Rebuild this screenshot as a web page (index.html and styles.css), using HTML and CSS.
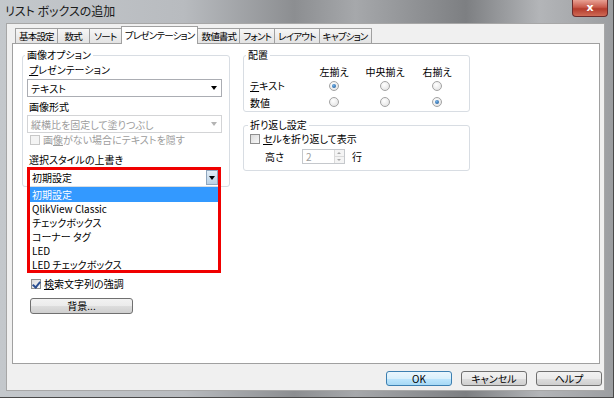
FILE: index.html
```html
<!DOCTYPE html>
<html lang="ja">
<head>
    <meta charset="UTF-8">
    <meta name="viewport" content="width=device-width, initial-scale=1.0">
    <title>リスト ボックスの追加</title>
    <link rel="stylesheet" href="styles.css">
</head>
<body>
    <div class="window">
        <div class="titlebar">
            <span class="title">リスト ボックスの追加</span>
            <span class="close">x</span>
        </div>
        <div class="client">
            <div class="tabs">
                <div class="tab">基本設定</div>
                <div class="tab">数式</div>
                <div class="tab">ソート</div>
                <div class="tab active">プレゼンテーション</div>
                <div class="tab">数値書式</div>
                <div class="tab">フォント</div>
                <div class="tab">レイアウト</div>
                <div class="tab">キャプション</div>
            </div>
            <div class="panel">
                <div class="col-left">
                    <fieldset class="group group-image">
                        <legend>画像オプション</legend>
                        <div class="label"><u>プ</u>レゼンテーション</div>
                        <div class="select"><span>テキスト</span><i class="arrow"></i></div>
                        <div class="label label-format">画像形式</div>
                        <div class="select disabled"><span>縦横比を固定して塗りつぶし</span><i class="arrow"></i></div>
                        <div class="check disabled"><span class="box"></span><span>画<u>像</u>がない場合にテキストを隠す</span></div>
                        <div class="label label-style">選択スタイルの上書き</div>
                        <div class="combo">
                            <div class="combo-field">
                                <span>初期設定</span>
                                <span class="combo-btn"><i class="arrow"></i></span>
                            </div>
                            <ul class="dropdown">
                                <li class="selected">初期設定</li>
                                <li>QlikView Classic</li>
                                <li>チェックボックス</li>
                                <li>コーナー タグ</li>
                                <li>LED</li>
                                <li>LED チェックボックス</li>
                            </ul>
                            <div class="mark"></div>
                        </div>
                    </fieldset>
                    <div class="check check-search"><span class="box checked"></span><span><u>検</u>索文字列の強調</span></div>
                    <div class="btn btn-bg">背景...</div>
                </div>
                <div class="col-right">
                    <fieldset class="group group-align">
                        <legend>配置</legend>
                        <div class="align-grid">
                            <span></span>
                            <span class="col-head">左揃え</span>
                            <span class="col-head">中央揃え</span>
                            <span class="col-head">右揃え</span>

                            <span class="row-label"><u>テ</u>キスト</span>
                            <span class="cell"><span class="radio on"></span></span>
                            <span class="cell"><span class="radio"></span></span>
                            <span class="cell"><span class="radio"></span></span>

                            <span class="row-label row-num">数値</span>
                            <span class="cell row-num"><span class="radio"></span></span>
                            <span class="cell row-num"><span class="radio"></span></span>
                            <span class="cell row-num"><span class="radio on"></span></span>
                        </div>
                    </fieldset>
                    <fieldset class="group group-wrap">
                        <legend>折り返し設定</legend>
                        <div class="check"><span class="box"></span><span><u>セ</u>ルを折り返して表示</span></div>
                        <div class="height-row">
                            <span class="height-label">高さ</span>
                            <span class="spin">
                                <span class="spin-value">2</span>
                                <span class="spin-btns">
                                    <span class="spin-up"></span>
                                    <span class="spin-down"></span>
                                </span>
                            </span>
                            <span class="unit">行</span>
                        </div>
                    </fieldset>
                </div>
            </div>
            <div class="buttons">
                <div class="btn btn-default">OK</div>
                <div class="btn">キャンセル</div>
                <div class="btn">ヘルプ</div>
            </div>
        </div>
    </div>
</body>
</html>
```

FILE: styles.css
```css
* {
    box-sizing: border-box;
}
body {
    margin: 0;
    font-family: "Noto Sans CJK JP", "Noto Sans", sans-serif;
    font-size: 10px;
    font-feature-settings: "palt";
    color: #000;
}
u {
    text-decoration-thickness: 1px;
    text-underline-offset: 1px;
}
.window {
    width: 614px;
    height: 398px;
    display: flex;
    flex-direction: column;
    background: linear-gradient(90deg, #c4c8cc 0%, #b8bbbf 30%, #8c8e91 48%, #a6a8ab 58%, #7d7f82 76%, #b3b5b8 88%, #9c9ea1 100%);
    border-right: 1px solid #4a4a4a;
    border-bottom: 1px solid #4a4a4a;
}
.titlebar {
    height: 23px;
    display: flex;
    align-items: flex-start;
    padding-left: 5px;
}
.title {
    font-size: 12px;
    line-height: 22px;
    color: #1a1a1a;
}
.close {
    margin-left: auto;
    margin-right: 5px;
    width: 36px;
    height: 17px;
    border: 1px solid #6b2b2b;
    border-top: none;
    border-radius: 0 0 4px 4px;
    background: linear-gradient(#e8a093, #c95b4c 45%, #b33b2c 55%, #cf6a55);
    color: #fff;
    font-family: "DejaVu Sans", sans-serif;
    font-weight: bold;
    font-size: 11px;
    line-height: 15px;
    text-align: center;
}
.client {
    flex: 1;
    margin: 0 8px 6px 6px;
    background: #f0f0f0;
    border: 1px solid #a7a7a7;
    display: flex;
    flex-direction: column;
    padding: 2px 2px 0 5px;
}

/* タブ */
.tabs {
    height: 17px;
    display: flex;
    align-items: flex-end;
    margin-left: 3px;
    position: relative;
    z-index: 1;
}
.tab {
    height: 15px;
    min-width: 33px;
    padding: 0 3px;
    border: 1px solid #a0a0a0;
    border-bottom: none;
    margin-right: -1px;
    background: linear-gradient(#f6f6f6, #e3e3e3);
    font-size: 9.5px;
    line-height: 14px;
    letter-spacing: -0.8px;
    text-align: center;
    white-space: nowrap;
}
.tab.active {
    height: 18px;
    margin-bottom: -1px;
    background: #fff;
    position: relative;
    z-index: 2;
    line-height: 16px;
}
.panel {
    height: 321px;
    margin-right: 2px;
    background: #fff;
    border: 1px solid #a0a0a0;
    display: flex;
    gap: 13px;
    padding: 5px 9px 0;
}

/* グループ */
.group {
    margin: 0;
    border: 1px solid #d8dde3;
    border-radius: 3px;
    padding: 2px 3px 1px 4px;
}
.group legend {
    padding: 0 2px;
    margin-left: -2px;
    line-height: 12px;
}
.col-left {
    width: 208px;
}
.col-right {
    width: 227px;
}
.label {
    line-height: 14px;
    margin-left: 2px;
}
.label-format {
    margin-top: 3px;
}
.label-style {
    margin-top: 6px;
}
.select {
    width: 195px;
    height: 18px;
    margin-top: 1px;
    border: 1px solid #abadb3;
    display: flex;
    align-items: center;
    padding: 0 4px 0 3px;
    background: #fff;
}
.label + .select {
    margin-top: 2px;
}
.label-format + .select {
    margin-top: 1px;
}
.select span {
    flex: 1;
}
.select.disabled {
    border-color: #d3d4d6;
    color: #9d9d9d;
}
.arrow {
    width: 0;
    height: 0;
    border-left: 3px solid transparent;
    border-right: 3px solid transparent;
    border-top: 4px solid #000;
}
.select.disabled .arrow {
    border-top-color: #b4b4b4;
}

/* チェックボックス・ラジオ */
.check {
    display: flex;
    align-items: center;
    gap: 3px;
    line-height: 14px;
    height: 14px;
    margin-left: 3px;
}
.check.disabled {
    color: #9d9d9d;
}
.box {
    width: 10px;
    height: 10px;
    border: 1px solid #8f8f8f;
    background: linear-gradient(135deg, #dcdcdc, #f8f8f8);
    position: relative;
}
.check.disabled .box {
    border-color: #c8c8c8;
    background: #f4f4f4;
}
.box.checked::after {
    content: "";
    position: absolute;
    left: 2px;
    top: 0;
    width: 3px;
    height: 6px;
    border-right: 2px solid #2b4f91;
    border-bottom: 2px solid #2b4f91;
    transform: rotate(40deg);
}
.radio {
    display: inline-block;
    width: 10px;
    height: 10px;
    border-radius: 50%;
    border: 1px solid #a3a3a3;
    background: radial-gradient(circle at 40% 35%, #fff, #dedede);
    position: relative;
}
.radio.on::after {
    content: "";
    position: absolute;
    left: 2px;
    top: 2px;
    width: 4px;
    height: 4px;
    border-radius: 50%;
    background: radial-gradient(circle at 40% 35%, #6fb0e8, #174f8c);
}

/* 選択スタイル コンボ */
.combo {
    position: relative;
    margin-top: 3px;
    margin-left: 3px;
    width: 188px;
}
.combo-field {
    height: 15px;
    display: flex;
    align-items: center;
    padding-left: 2px;
    background: #fff;
}
.combo-field span:first-child {
    flex: 1;
}
.combo-btn {
    width: 12px;
    height: 15px;
    border: 1px solid #8fa6bd;
    background: linear-gradient(#e3eef8, #b9d0e4);
    display: flex;
    align-items: center;
    justify-content: center;
}
.dropdown {
    position: absolute;
    top: 17px;
    left: 0;
    right: 0;
    margin: 0;
    padding: 0;
    list-style: none;
    background: #fff;
    z-index: 3;
}
.dropdown li {
    height: 14px;
    line-height: 14px;
    padding-left: 2px;
    white-space: nowrap;
}
.dropdown li.selected {
    height: 15px;
    line-height: 15px;
    background: #3399ff;
    color: #fff;
}
.mark {
    position: absolute;
    top: -3px;
    left: -3px;
    right: -3px;
    height: 106px;
    border: 3px solid #f00000;
    z-index: 4;
}
.check-search {
    margin-top: 90px;
    margin-left: 9px;
}

/* ボタン */
.btn {
    height: 16px;
    border: 1px solid #707070;
    border-radius: 3px;
    background: linear-gradient(#f2f2f2 0%, #ebebeb 50%, #dddddd 51%, #cfcfcf 100%);
    text-align: center;
    line-height: 14px;
}
.btn-bg {
    width: 103px;
    margin: 7px 0 0 8px;
}
.buttons {
    display: flex;
    justify-content: flex-end;
    gap: 9px;
    margin-top: 7px;
}
.buttons .btn {
    width: 66px;
    height: 15px;
    line-height: 13px;
}
.btn-default {
    border-color: #3c7fb1;
    background: linear-gradient(#eaf6fd 0%, #d9f0fc 50%, #bee6fd 51%, #a7d9f5 100%);
}

/* 配置 */
.align-grid {
    display: grid;
    grid-template-columns: 60px 48px 54px 50px;
    grid-auto-rows: 14px;
    line-height: 14px;
    padding: 2px 0 4px 2px;
}
.col-head {
    text-align: center;
}
.cell {
    display: flex;
    align-items: center;
    justify-content: center;
}
.row-num {
    margin-top: 3px;
}
.group-align {
    padding-bottom: 0;
}

/* 折り返し */
.group-wrap {
    margin-top: 7px;
    padding: 1px 3px 6px 6px;
}
.group-wrap .check {
    margin-left: 0;
}
.height-row {
    display: flex;
    align-items: center;
    height: 16px;
    margin: 2px 0 0 15px;
}
.height-label {
    width: 37px;
}
.spin {
    width: 43px;
    height: 15px;
    border: 1px solid #c5c8cc;
    display: flex;
    color: #9d9d9d;
}
.spin-value {
    flex: 1;
    padding-left: 3px;
    line-height: 13px;
}
.spin-btns {
    width: 10px;
    display: flex;
    flex-direction: column;
    border-left: 1px solid #dadada;
}
.spin-up,
.spin-down {
    flex: 1;
    position: relative;
    background: #f4f4f4;
}
.spin-up {
    border-bottom: 1px solid #dadada;
}
.spin-up::after,
.spin-down::after {
    content: "";
    position: absolute;
    left: 2px;
    width: 0;
    height: 0;
    border-left: 2px solid transparent;
    border-right: 2px solid transparent;
}
.spin-up::after {
    top: 2px;
    border-bottom: 2px solid #a8a8a8;
}
.spin-down::after {
    top: 2px;
    border-top: 2px solid #a8a8a8;
}
.unit {
    margin-left: 7px;
}
```
